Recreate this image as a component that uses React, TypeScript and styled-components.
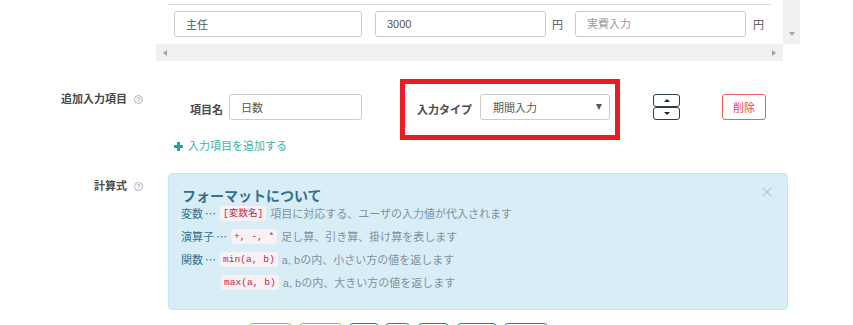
import React from "react";
import styled, { createGlobalStyle } from "styled-components";

const GlobalStyle = createGlobalStyle`
  html, body { margin: 0; padding: 0; background: #fff; }
  body {
    font-family: "Liberation Sans", "Noto Sans CJK JP", sans-serif;
    font-size: 11px;
    color: #555;
    overflow: hidden;
  }
  * { box-sizing: border-box; }
`;

const FONT = `"Liberation Sans", "Noto Sans CJK JP", sans-serif`;

const Page = styled.div`
  width: 853px;
  height: 325px;
  overflow: hidden;
`;

/* ---------- scrolled table fragment ---------- */
const ScrollArea = styled.div`
  margin-left: 156px;
  width: 644px;
`;
const ScrollBody = styled.div`
  display: flex;
  height: 44px;
`;
const Viewport = styled.div`
  width: 627px;
  padding: 4px 0 0 12px;
  overflow: hidden;
`;
const TopRule = styled.div`
  width: 603px;
  border-top: 1px solid #ddd;
`;
const CellRow = styled.div`
  display: flex;
  align-items: center;
  margin-top: 6px;
  padding-left: 6px;
`;
const TextInput = styled.input<{ $w: number; $ml?: number }>`
  width: ${(p) => p.$w}px;
  height: 26px;
  margin: 0 0 0 ${(p) => p.$ml ?? 0}px;
  border: 1px solid #ccc;
  border-radius: 3px;
  padding: 0 11px;
  font-family: ${FONT};
  font-size: 11px;
  color: #555;
  background: #fff;
  outline: none;
  flex: none;
  &::placeholder { color: #999; }
`;
const Unit = styled.span<{ $ml: number }>`
  margin-left: ${(p) => p.$ml}px;
  font-size: 11px;
  color: #555;
  width: 11px;
  flex: none;
`;
const VScroll = styled.div`
  width: 17px;
  height: 44px;
  background: #f1f1f1;
  display: flex;
  flex-direction: column;
  justify-content: flex-end;
  align-items: center;
  padding-bottom: 8px;
`;
const ArrowDown = styled.span`
  width: 0;
  height: 0;
  border-left: 3.5px solid transparent;
  border-right: 3.5px solid transparent;
  border-top: 4px solid #a3a3a3;
`;
const HScroll = styled.div`
  width: 627px;
  height: 17px;
  background: #f1f1f1;
  display: flex;
  justify-content: space-between;
  align-items: center;
  padding: 0 7px 0 7px;
`;
const ArrowSide = styled.span<{ $dir: "left" | "right" }>`
  width: 0;
  height: 0;
  border-top: 3.5px solid transparent;
  border-bottom: 3.5px solid transparent;
  ${(p) =>
    p.$dir === "left"
      ? "border-right: 4px solid #a3a3a3;"
      : "border-left: 4px solid #a3a3a3;"}
`;

/* ---------- form rows ---------- */
const FormRow = styled.div<{ $mt: number }>`
  display: flex;
  align-items: flex-start;
  margin-top: ${(p) => p.$mt}px;
`;
const FieldLabel = styled.div<{ $pt: number }>`
  width: 150px;
  flex: none;
  margin-top: ${(p) => p.$pt}px;
  padding-right: 7px;
  display: flex;
  justify-content: flex-end;
  align-items: center;
  gap: 7px;
  font-weight: bold;
  font-size: 11px;
  line-height: 15px;
  color: #4a4a4a;
`;
const HelpIcon = styled.span`
  width: 9px;
  height: 9px;
  border: 1px solid #a9b6c6;
  border-radius: 50%;
  color: #a9b6c6;
  font-size: 7px;
  line-height: 7px;
  font-weight: bold;
  display: flex;
  align-items: center;
  justify-content: center;
`;
const FieldBody = styled.div<{ $pt?: number }>`
  margin-left: 18px;
  width: 620px;
  padding-top: ${(p) => p.$pt ?? 0}px;
`;
const SubRow = styled.div`
  display: flex;
  align-items: flex-start;
  padding-left: 22px;
`;
const InlineLabel = styled.span<{ $mr: number }>`
  margin-top: 9px;
  margin-right: ${(p) => p.$mr}px;
  font-weight: bold;
  font-size: 11px;
  line-height: 15px;
  color: #4a4a4a;
  white-space: nowrap;
`;
const Highlight = styled.div`
  display: flex;
  align-items: flex-start;
  border: 5px solid #ec1c24;
  padding: 10px 5px 15px 12px;
  margin: -15px 0 -20px 38px;
`;
const SelectBox = styled.div`
  width: 130px;
  height: 26px;
  border: 1px solid #ccc;
  border-radius: 3px;
  padding: 0 7px 0 12px;
  display: flex;
  align-items: center;
  justify-content: space-between;
  color: #555;
  font-size: 11px;
`;
const Caret = styled.span`
  width: 0;
  height: 0;
  border-left: 3px solid transparent;
  border-right: 3px solid transparent;
  border-top: 6px solid #555;
  margin-top: -1px;
`;
const MoveGroup = styled.div`
  display: flex;
  flex-direction: column;
  margin-left: 33px;
`;
const MoveButton = styled.button<{ $dir: "up" | "down" }>`
  width: 27px;
  height: 13px;
  padding: 0;
  border: 1px solid #2e3d4f;
  border-radius: 3px;
  background: #fff;
  display: flex;
  align-items: center;
  justify-content: center;
  &::before {
    content: "";
    width: 0;
    height: 0;
    border-left: 3px solid transparent;
    border-right: 3px solid transparent;
    ${(p) =>
      p.$dir === "up"
        ? "border-bottom: 3px solid #1d2530;"
        : "border-top: 3px solid #1d2530;"}
  }
`;
const DeleteButton = styled.button`
  margin-left: 42px;
  width: 44px;
  height: 26px;
  border: 1px solid #ef5b5b;
  border-radius: 3px;
  background: #fff;
  color: #e8474a;
  font-family: ${FONT};
  font-size: 11px;
  padding: 0;
`;
const AddLink = styled.div`
  margin-top: 19px;
  padding-left: 6px;
  display: flex;
  align-items: center;
  gap: 5px;
  font-size: 11px;
  line-height: 15px;
  color: #3bb3a3;
`;

/* ---------- alert ---------- */
const Alert = styled.div`
  width: 620px;
  background: #d9edf7;
  border: 1px solid #bce8f1;
  border-radius: 4px;
  padding: 15px 15px 17px 12px;
  color: #31708f;
`;
const AlertHead = styled.div`
  display: flex;
  justify-content: space-between;
  align-items: flex-start;
`;
const AlertTitle = styled.div`
  font-size: 14px;
  line-height: 14px;
  font-weight: bold;
  color: #31708f;
  margin-left: 1px;
`;
const CloseIcon = styled.svg`
  margin-top: -2px;
  margin-right: 0;
`;
const Lines = styled.div`
  display: flex;
  flex-direction: column;
  gap: 3px;
`;
const Line = styled.div<{ $indent?: number }>`
  display: flex;
  align-items: center;
  gap: 4px;
  height: 20px;
  font-size: 11px;
  padding-left: ${(p) => p.$indent ?? 0}px;
`;
const Term = styled.span`
  color: #31708f;
  white-space: pre;
`;
const Dots = styled.span`
  font-family: "Noto Sans CJK JP", "DejaVu Sans", sans-serif;
  margin-left: 2px;
`;
const Desc = styled.span`
  color: #7d929e;
  white-space: nowrap;
`;
const Code = styled.code`
  display: inline-block;
  height: 15px;
  line-height: 15px;
  padding: 0 3px;
  border-radius: 3px;
  background: #f9f2f4;
  color: #c7254e;
  font-family: "Liberation Mono", "DejaVu Sans Mono", "Noto Sans CJK JP", monospace;
  font-size: 9.6px;
  white-space: pre;
`;

/* ---------- bottom buttons ---------- */
const ButtonRow = styled.div`
  display: flex;
  margin-top: 13px;
  padding-left: 81px;
`;
const ToolButton = styled.button<{ $w: number; $ml: number; $tone: "green" | "blue" }>`
  width: ${(p) => p.$w}px;
  margin-left: ${(p) => p.$ml}px;
  height: 28px;
  border: 1px solid ${(p) => (p.$tone === "green" ? "#8dc63f" : "#3c6ec8")};
  border-radius: 4px;
  background: #fff;
  padding: 0;
`;

const tools: { w: number; ml: number; tone: "green" | "blue" }[] = [
  { w: 43, ml: 0, tone: "green" },
  { w: 43, ml: 7, tone: "green" },
  { w: 30, ml: 7, tone: "blue" },
  { w: 25, ml: 6, tone: "blue" },
  { w: 31, ml: 8, tone: "blue" },
  { w: 40, ml: 8, tone: "blue" },
  { w: 44, ml: 7, tone: "blue" },
];

export default function App() {
  return (
    <Page>
      <GlobalStyle />
      <ScrollArea>
        <ScrollBody>
          <Viewport>
            <TopRule />
            <CellRow>
              <TextInput $w={188} defaultValue="主任" readOnly />
              <TextInput $w={171} $ml={13} defaultValue="3000" readOnly />
              <Unit $ml={6}>円</Unit>
              <TextInput $w={171} $ml={12} placeholder="実費入力" readOnly />
              <Unit $ml={7}>円</Unit>
            </CellRow>
          </Viewport>
          <VScroll>
            <ArrowDown />
          </VScroll>
        </ScrollBody>
        <HScroll>
          <ArrowSide $dir="left" />
          <ArrowSide $dir="right" />
        </HScroll>
      </ScrollArea>

      <FormRow $mt={31}>
        <FieldLabel $pt={0}>
          追加入力項目<HelpIcon>?</HelpIcon>
        </FieldLabel>
        <FieldBody $pt={2}>
          <SubRow>
            <InlineLabel $mr={6}>項目名</InlineLabel>
            <TextInput $w={133} defaultValue="日数" readOnly />
            <Highlight>
              <InlineLabel $mr={8}>入力タイプ</InlineLabel>
              <SelectBox>
                <span>期間入力</span>
                <Caret />
              </SelectBox>
            </Highlight>
            <MoveGroup>
              <MoveButton $dir="up" aria-label="上へ" />
              <MoveButton $dir="down" aria-label="下へ" />
            </MoveGroup>
            <DeleteButton>削除</DeleteButton>
          </SubRow>
          <AddLink>
            <svg width="9" height="9" viewBox="0 0 9 9">
              <path d="M3 0h3v3h3v3H6v3H3V6H0V3h3z" fill="#1fa893" />
            </svg>
            <span>入力項目を追加する</span>
          </AddLink>
        </FieldBody>
      </FormRow>

      <FormRow $mt={19}>
        <FieldLabel $pt={6}>
          計算式<HelpIcon>?</HelpIcon>
        </FieldLabel>
        <FieldBody>
          <Alert>
            <AlertHead>
              <AlertTitle>フォーマットについて</AlertTitle>
              <CloseIcon width="10" height="10" viewBox="0 0 10 10">
                <path d="M1 1L9 9M9 1L1 9" stroke="#b4c6cf" strokeWidth="1.1" />
              </CloseIcon>
            </AlertHead>
            <Lines>
              <Line>
                <Term>変数<Dots>⋯</Dots></Term>
                <Code>[変数名]</Code>
                <Desc>項目に対応する、ユーザの入力値が代入されます</Desc>
              </Line>
              <Line>
                <Term>演算子<Dots>⋯</Dots></Term>
                <Code>+, -, *</Code>
                <Desc>足し算、引き算、掛け算を表します</Desc>
              </Line>
              <Line>
                <Term>関数<Dots>⋯</Dots></Term>
                <Code>min(a, b)</Code>
                <Desc>a, bの内、小さい方の値を返します</Desc>
              </Line>
              <Line $indent={40}>
                <Code>max(a, b)</Code>
                <Desc>a, bの内、大きい方の値を返します</Desc>
              </Line>
            </Lines>
          </Alert>
          <ButtonRow>
            {tools.map((t, i) => (
              <ToolButton key={i} $w={t.w} $ml={t.ml} $tone={t.tone} />
            ))}
          </ButtonRow>
        </FieldBody>
      </FormRow>
    </Page>
  );
}
